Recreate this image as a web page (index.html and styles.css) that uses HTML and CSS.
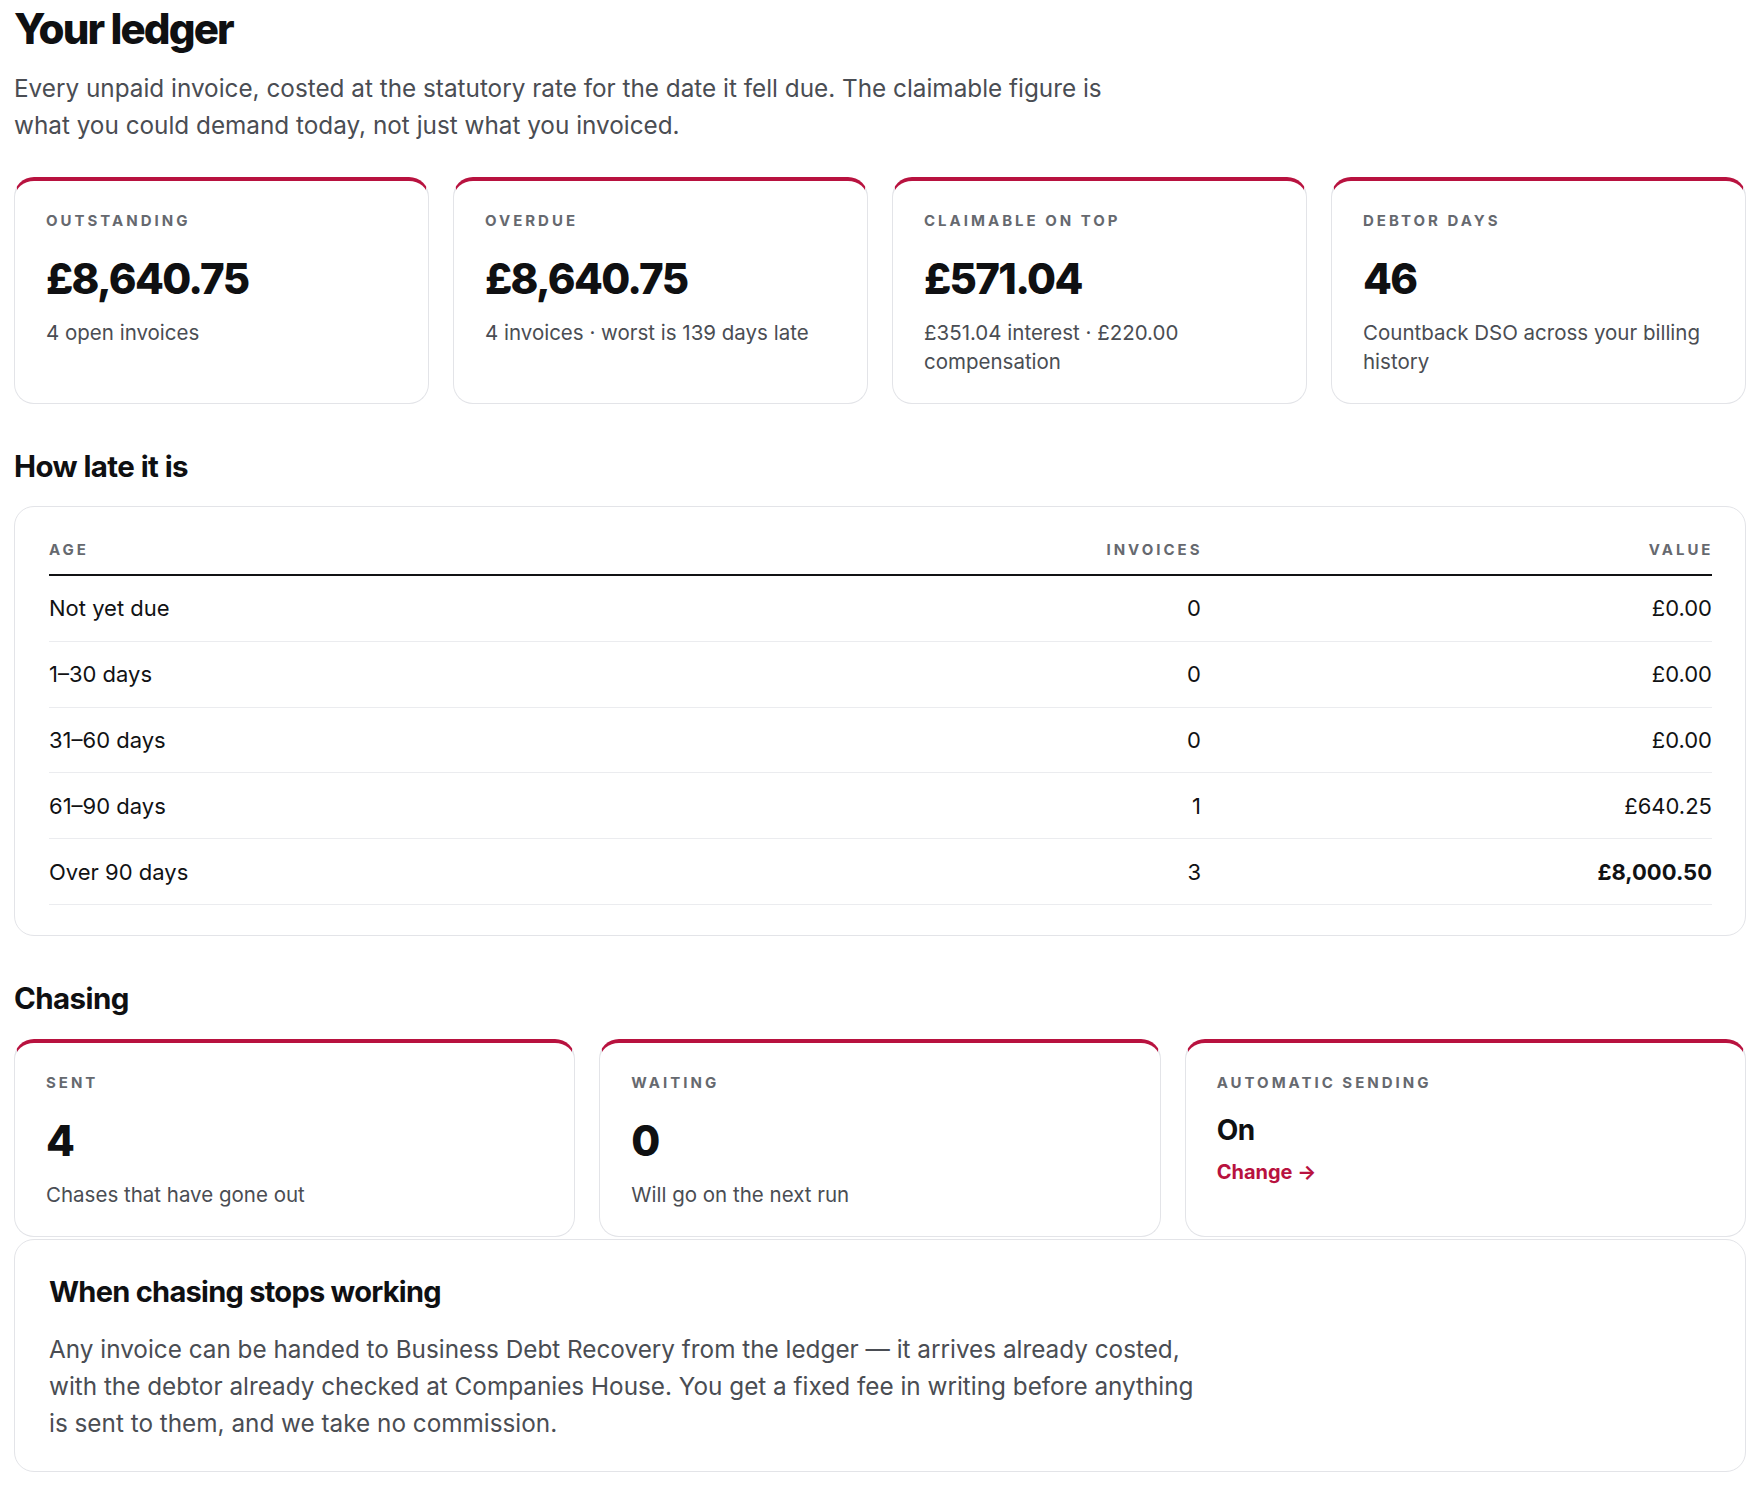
FILE: index.html
```html
<!DOCTYPE html>
<html lang="en">
<head>
<meta charset="utf-8">
<title>Your ledger</title>
<link rel="stylesheet" href="styles.css">
</head>
<body>
<main class="page">
  <header class="intro">
    <h1 class="title">Your ledger</h1>
    <p class="lede">Every unpaid invoice, costed at the statutory rate for the date it fell due. The claimable figure is what you could demand today, not just what you invoiced.</p>
  </header>

  <section class="stats stats-4">
    <div class="card">
      <div class="label">Outstanding</div>
      <div class="figure">£8,640.75</div>
      <div class="note">4 open invoices</div>
    </div>
    <div class="card">
      <div class="label">Overdue</div>
      <div class="figure">£8,640.75</div>
      <div class="note">4 invoices · worst is 139 days late</div>
    </div>
    <div class="card">
      <div class="label">Claimable on top</div>
      <div class="figure">£571.04</div>
      <div class="note">£351.04 interest · £220.00 compensation</div>
    </div>
    <div class="card">
      <div class="label">Debtor days</div>
      <div class="figure">46</div>
      <div class="note">Countback DSO across your billing history</div>
    </div>
  </section>

  <h2 class="section-title">How late it is</h2>
  <section class="panel table-panel">
    <div class="table">
      <div class="row head">
        <div class="cell">Age</div>
        <div class="cell num">Invoices</div>
        <div class="cell num">Value</div>
      </div>
      <div class="row">
        <div class="cell">Not yet due</div>
        <div class="cell num">0</div>
        <div class="cell num">£0.00</div>
      </div>
      <div class="row">
        <div class="cell">1–30 days</div>
        <div class="cell num">0</div>
        <div class="cell num">£0.00</div>
      </div>
      <div class="row">
        <div class="cell">31–60 days</div>
        <div class="cell num">0</div>
        <div class="cell num">£0.00</div>
      </div>
      <div class="row">
        <div class="cell">61–90 days</div>
        <div class="cell num">1</div>
        <div class="cell num">£640.25</div>
      </div>
      <div class="row">
        <div class="cell">Over 90 days</div>
        <div class="cell num">3</div>
        <div class="cell num strong">£8,000.50</div>
      </div>
    </div>
  </section>

  <h2 class="section-title">Chasing</h2>
  <section class="stats stats-3">
    <div class="card">
      <div class="label">Sent</div>
      <div class="figure">4</div>
      <div class="note">Chases that have gone out</div>
    </div>
    <div class="card">
      <div class="label">Waiting</div>
      <div class="figure">0</div>
      <div class="note">Will go on the next run</div>
    </div>
    <div class="card">
      <div class="label">Automatic sending</div>
      <div class="state">On</div>
      <a class="change" href="#">Change →</a>
    </div>
  </section>

  <section class="panel callout">
    <h3 class="callout-title">When chasing stops working</h3>
    <p class="callout-text">Any invoice can be handed to Business Debt Recovery from the ledger — it arrives already costed, with the debtor already checked at Companies House. You get a fixed fee in writing before anything is sent to them, and we take no commission.</p>
  </section>
</main>
</body>
</html>
```

FILE: styles.css
```css
* { box-sizing: border-box; }

html, body {
  margin: 0;
  padding: 0;
  background: #ffffff;
}

body {
  font-family: Inter, "Noto Sans", "Liberation Sans", sans-serif;
  color: #111214;
}

.page {
  padding: 4px 14px 14px;
}

.title {
  margin: 0;
  font-size: 42px;
  line-height: 50px;
  font-weight: 800;
  letter-spacing: -0.045em;
  color: #0f1012;
}

.lede {
  margin: 16px 0 0;
  max-width: 1120px;
  font-size: 24.3px;
  line-height: 37px;
  color: #4a4d53;
}

.stats {
  display: grid;
  gap: 24px;
  margin-top: 33px;
}

.stats-4 { grid-template-columns: repeat(4, 1fr); }
.stats-3 { grid-template-columns: repeat(3, 1fr); margin-top: 25px; }

.card {
  border: 1px solid #e3e4e8;
  border-top: 4px solid #b8123f;
  border-radius: 20px;
  padding: 30px 30px 27px 31px;
  background: #fff;
}

.label {
  font-size: 15px;
  line-height: 20px;
  font-weight: 700;
  letter-spacing: 0.2em;
  text-transform: uppercase;
  color: #66696f;
}

.figure {
  margin-top: 23px;
  font-size: 42px;
  line-height: 50px;
  font-weight: 800;
  letter-spacing: -0.04em;
  color: #0f1012;
}

.note {
  margin-top: 14px;
  font-size: 20.5px;
  line-height: 29px;
  color: #4a4d53;
}

.state {
  margin-top: 20px;
  font-size: 28px;
  line-height: 34px;
  font-weight: 700;
  letter-spacing: -0.02em;
  color: #0f1012;
}

.change {
  display: inline-block;
  margin-top: 11px;
  font-size: 20px;
  line-height: 28px;
  font-weight: 700;
  color: #b8123f;
  text-decoration: none;
}

.section-title {
  margin: 47px 0 0;
  font-size: 29.5px;
  line-height: 31px;
  font-weight: 700;
  letter-spacing: -0.02em;
  color: #0f1012;
}

.panel {
  border: 1px solid #e3e4e8;
  border-radius: 20px;
  background: #fff;
}

.table-panel {
  margin-top: 24px;
  padding: 31px 33px 30px 34px;
}

.row {
  display: grid;
  grid-template-columns: 1fr 160px 511px;
  border-bottom: 1px solid #ebecef;
}

.row.head {
  border-bottom: 2px solid #111214;
}

.cell {
  padding: 18.4px 0;
  font-size: 22px;
  line-height: 28px;
  color: #111214;
}

.row.head .cell {
  padding: 2px 0 14px;
  font-size: 15px;
  line-height: 20px;
  font-weight: 700;
  letter-spacing: 0.2em;
  text-transform: uppercase;
  color: #66696f;
}

.row.head .cell.num {
  margin-right: -0.1em;
}

.num { text-align: right; }
.strong { font-weight: 700; }

.callout {
  margin-top: 2px;
  padding: 35px 33px 29px 34px;
}

.callout-title {
  margin: 0;
  font-size: 29px;
  line-height: 34px;
  font-weight: 700;
  letter-spacing: -0.025em;
  color: #0f1012;
}

.callout-text {
  margin: 22px 0 0;
  max-width: 1152px;
  font-size: 24.3px;
  line-height: 37px;
  color: #4a4d53;
}
```
